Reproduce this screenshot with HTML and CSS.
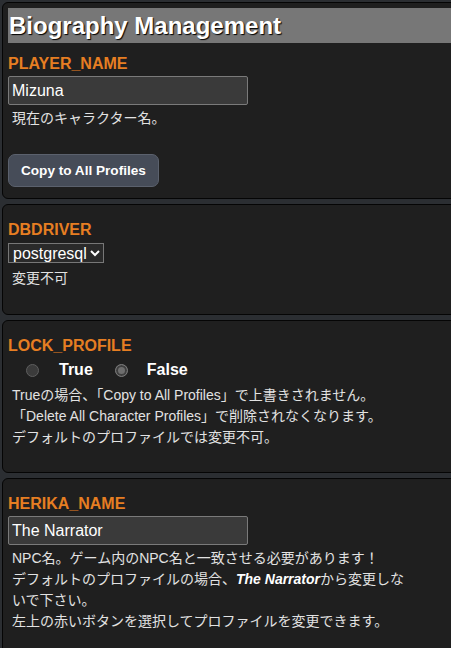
FILE: index.html
```html
<!DOCTYPE html>
<html lang="ja">
<head>
  <meta charset="UTF-8" />
  <meta name="viewport" content="width=device-width, initial-scale=1.0" />
  <title>Biography Management</title>
  <link rel="stylesheet" href="styles.css">
</head>
<body>
  <div class="card">
    <h2 class="section-title">Biography Management</h2>
    <label class="field-label" for="player_name">PLAYER_NAME</label>
    <input class="text-input" id="player_name" type="text" value="Mizuna" />
    <p class="desc">現在のキャラクター名。</p>
    <button class="copy-btn" type="button">Copy to All Profiles</button>
  </div>

  <div class="card">
    <label class="field-label" for="dbdriver">DBDRIVER</label>
    <select class="select-input" id="dbdriver">
      <option>postgresql</option>
    </select>
    <p class="desc desc-last">変更不可</p>
  </div>

  <div class="card">
    <label class="field-label">LOCK_PROFILE</label>
    <div class="radio-row">
      <input class="radio" type="radio" name="lock" disabled />
      <span class="radio-text">True</span>
      <input class="radio" type="radio" name="lock" checked disabled />
      <span class="radio-text">False</span>
    </div>
    <p class="desc desc-last">Trueの場合、「Copy to All Profiles」で上書きされません。<br>「Delete All Character Profiles」で削除されなくなります。<br>デフォルトのプロファイルでは変更不可。</p>
  </div>

  <div class="card">
    <label class="field-label" for="herika_name">HERIKA_NAME</label>
    <input class="text-input" id="herika_name" type="text" value="The Narrator" />
    <p class="desc desc-last">NPC名。ゲーム内のNPC名と一致させる必要があります！<br>デフォルトのプロファイルの場合、<b><i>The Narrator</i></b>から変更しな<br>いで下さい。<br>左上の赤いボタンを選択してプロファイルを変更できます。</p>
  </div>
</body>
</html>
```

FILE: styles.css
```css
html {
  overflow: hidden;
}
body {
  margin: 0;
  padding: 2px;
  background: #2b2e32;
  font-family: "Liberation Sans", Arial, "Noto Sans CJK JP", sans-serif;
  color: #e6e6e6;
}
.card {
  width: 700px;
  background: #1f1f1f;
  border: 1px solid #050505;
  border-radius: 6px;
  padding: 5px;
  margin-bottom: 5px;
}
.section-title {
  margin: 0;
  height: 35px;
  line-height: 35px;
  background: #777777;
  color: #ffffff;
  font-size: 24px;
  font-weight: bold;
  padding-left: 1px;
  text-shadow: 1px 1px 1px #000;
}
.field-label {
  display: block;
  margin-top: 11px;
  color: #e67e22;
  font-size: 16px;
  font-weight: bold;
  line-height: 18px;
}
.section-title + .field-label {
  margin-top: 12px;
}
.text-input {
  display: block;
  box-sizing: border-box;
  width: 240px;
  height: 29px;
  margin-top: 3px;
  padding: 0 3px;
  background: #3a3a3a;
  border: 1px solid #7a7a7a;
  border-radius: 2px;
  color: #ffffff;
  font-family: "Liberation Sans", Arial, sans-serif;
  font-size: 16px;
}
.select-input {
  display: block;
  box-sizing: border-box;
  width: 96px;
  height: 20px;
  margin-top: 4px;
  padding: 0;
  background: #2a2a2a;
  border: 1px solid #777;
  border-radius: 0;
  color: #ffffff;
  font-family: "Liberation Sans", Arial, sans-serif;
  font-size: 16px;
  color-scheme: dark;
}
.desc {
  margin: 3px 0 0;
  padding-left: 4px;
  font-family: "Liberation Sans", Arial, "Noto Sans CJK JP", sans-serif;
  font-size: 14px;
  line-height: 21px;
  color: #e2e2e2;
}
.desc-last {
  margin-bottom: 19px;
}
.select-input + .desc {
  margin: 5px 0 20px;
}
.radio-row + .desc {
  margin-top: 0;
}
.desc b {
  color: #ffffff;
}
.copy-btn {
  display: block;
  margin: 25px 0 6px;
  height: 33px;
  padding: 0 12px;
  background: #464c58;
  border: 1px solid #5b616d;
  border-radius: 7px;
  color: #ffffff;
  font-family: "Liberation Sans", Arial, sans-serif;
  font-size: 13.6px;
  font-weight: bold;
}
.radio-row {
  display: flex;
  align-items: center;
  height: 30px;
  padding-left: 18px;
}
.radio {
  appearance: none;
  box-sizing: border-box;
  width: 13px;
  height: 13px;
  margin: 0;
  border-radius: 50%;
  background: #3b3b3b;
  border: 1px solid #5e5e5e;
}
.radio:checked {
  background: #6e6e6e;
  border: 1px solid #7a7a7a;
  box-shadow: inset 0 0 0 2px #3f3f3f;
}
.radio-text {
  margin: 0 22px 0 20px;
  font-size: 16px;
  font-weight: bold;
  color: #ffffff;
}
.radio:checked + .radio-text {
  margin-left: 19px;
}
```
